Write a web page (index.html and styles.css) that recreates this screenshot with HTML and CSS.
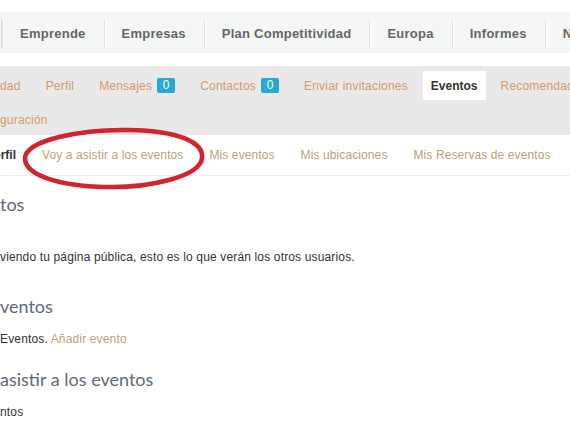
FILE: index.html
```html
<!DOCTYPE html>
<html lang="es">
<head>
    <meta charset="UTF-8">
    <title>Eventos</title>
    <link rel="stylesheet" href="styles.css">
</head>
<body>
    <div class="page">
        <!-- Main menu -->
        <ul class="main-nav">
            <li class="main-item first"></li>
            <li class="main-item">Emprende</li>
            <li class="main-item">Empresas</li>
            <li class="main-item">Plan Competitividad</li>
            <li class="main-item">Europa</li>
            <li class="main-item">Informes</li>
            <li class="main-item">N</li>
        </ul>

        <!-- Profile tabs -->
        <div class="profile-nav">
            <ul class="tab-row">
                <li class="tab cut">dad</li>
                <li class="tab">Perfil</li>
                <li class="tab">Mensajes <span class="badge">0</span></li>
                <li class="tab">Contactos <span class="badge">0</span></li>
                <li class="tab">Enviar invitaciones</li>
                <li class="tab active">Eventos</li>
                <li class="tab">Recomendaciones</li>
            </ul>
            <ul class="tab-row">
                <li class="tab cut">guración</li>
            </ul>
        </div>

        <!-- Events sub menu -->
        <div class="sub-wrap">
            <ul class="sub-nav">
                <li class="sub-item current cut">erfil</li>
                <li class="sub-item">Voy a asistir a los eventos</li>
                <li class="sub-item">Mis eventos</li>
                <li class="sub-item">Mis ubicaciones</li>
                <li class="sub-item">Mis Reservas de eventos</li>
            </ul>
            <svg class="mark" width="190" height="66" viewBox="0 0 190 66">
                <path d="M5 33 C4 14 62 3 110 4 C158 5 184 16 182 32 C180 51 128 62 86 61 C38 60 6 49 5 33 Z"
                      fill="none" stroke="#d3232b" stroke-width="4.5"/>
            </svg>
        </div>

        <div class="content">
            <h2 class="title first-title">tos</h2>
            <p class="note">viendo tu página pública, esto es lo que verán los otros usuarios.</p>

            <h2 class="title">ventos</h2>
            <p class="line">Eventos. <a class="link">Añadir evento</a></p>

            <h2 class="title">asistir a los eventos</h2>
            <p class="line">ntos</p>
        </div>
    </div>
</body>
</html>
```

FILE: styles.css
```css
body {
    margin: 0;
    background-color: #fff;
    font-family: "Liberation Sans", Arial, sans-serif;
    font-size: 12px;
    color: #333;
}

.page {
    width: 570px;
    overflow: hidden;
    padding-top: 12px;
}

ul {
    list-style: none;
    margin: 0;
    padding: 0;
}

/* Main menu */
.main-nav {
    display: flex;
    height: 41px;
    background-color: #f5f6f6;
    white-space: nowrap;
}

.main-item {
    display: flex;
    align-items: center;
    padding: 0 18px 0 17px;
    font-size: 13px;
    font-weight: bold;
    letter-spacing: 0.25px;
    color: #666;
    border-left: 1px solid #e0e0e0;
    box-shadow: inset 1px 0 0 #fff;
    margin: 7px 0 5px;
}

.main-item.first {
    padding: 0;
    margin-left: 1px;
    border-left: none;
    border-right: 1px solid #e0e0e0;
    width: 0;
}

/* Profile tabs */
.profile-nav {
    display: flex;
    flex-direction: column;
    gap: 5px;
    margin-top: 13px;
    padding: 5px 0 1px;
    background-color: #e9e9e9;
}

.tab-row {
    display: flex;
    gap: 5px;
}

.tab {
    display: flex;
    align-items: center;
    gap: 5px;
    height: 29px;
    padding: 0 10px;
    color: #d69a66;
    letter-spacing: 0.2px;
    white-space: nowrap;
}

.tab.cut {
    padding-left: 0;
}

.tab.active {
    padding: 0 8px;
    background-color: #fff;
    color: #333;
    font-weight: bold;
    letter-spacing: 0;
}

.badge {
    display: inline-block;
    width: 18px;
    height: 15px;
    line-height: 15px;
    border-radius: 2px;
    background-color: #2aa7d4;
    color: #fff;
    text-align: center;
    letter-spacing: 0;
}

/* Events sub menu */
.sub-wrap {
    position: relative;
}

.sub-nav {
    display: flex;
    height: 40px;
    border-bottom: 1px solid #ececec;
}

.sub-item {
    display: flex;
    align-items: center;
    padding: 0 13px;
    color: #bba276;
    letter-spacing: 0.1px;
    white-space: nowrap;
}

.sub-item.current {
    color: #333;
    font-weight: bold;
    letter-spacing: 0;
}

.sub-item.cut {
    padding-left: 0;
    margin-left: -6px;
}

.mark {
    position: absolute;
    left: 20px;
    top: -9px;
}

/* Page content */
.content {
    padding-top: 16px;
}

.title {
    margin: 28px 0 12px;
    font-family: Lato, "Liberation Sans", sans-serif;
    font-size: 18px;
    font-weight: normal;
    line-height: 24px;
    color: #5e6a78;
}

.title.first-title {
    margin-top: 0;
    margin-bottom: 32px;
}

.note,
.line {
    margin: 0;
    line-height: 18px;
    letter-spacing: 0.15px;
}

.note + .title {
    margin-top: 28px;
}

.line + .title {
    margin-top: 19px;
}

.link {
    color: #bba276;
}
```
